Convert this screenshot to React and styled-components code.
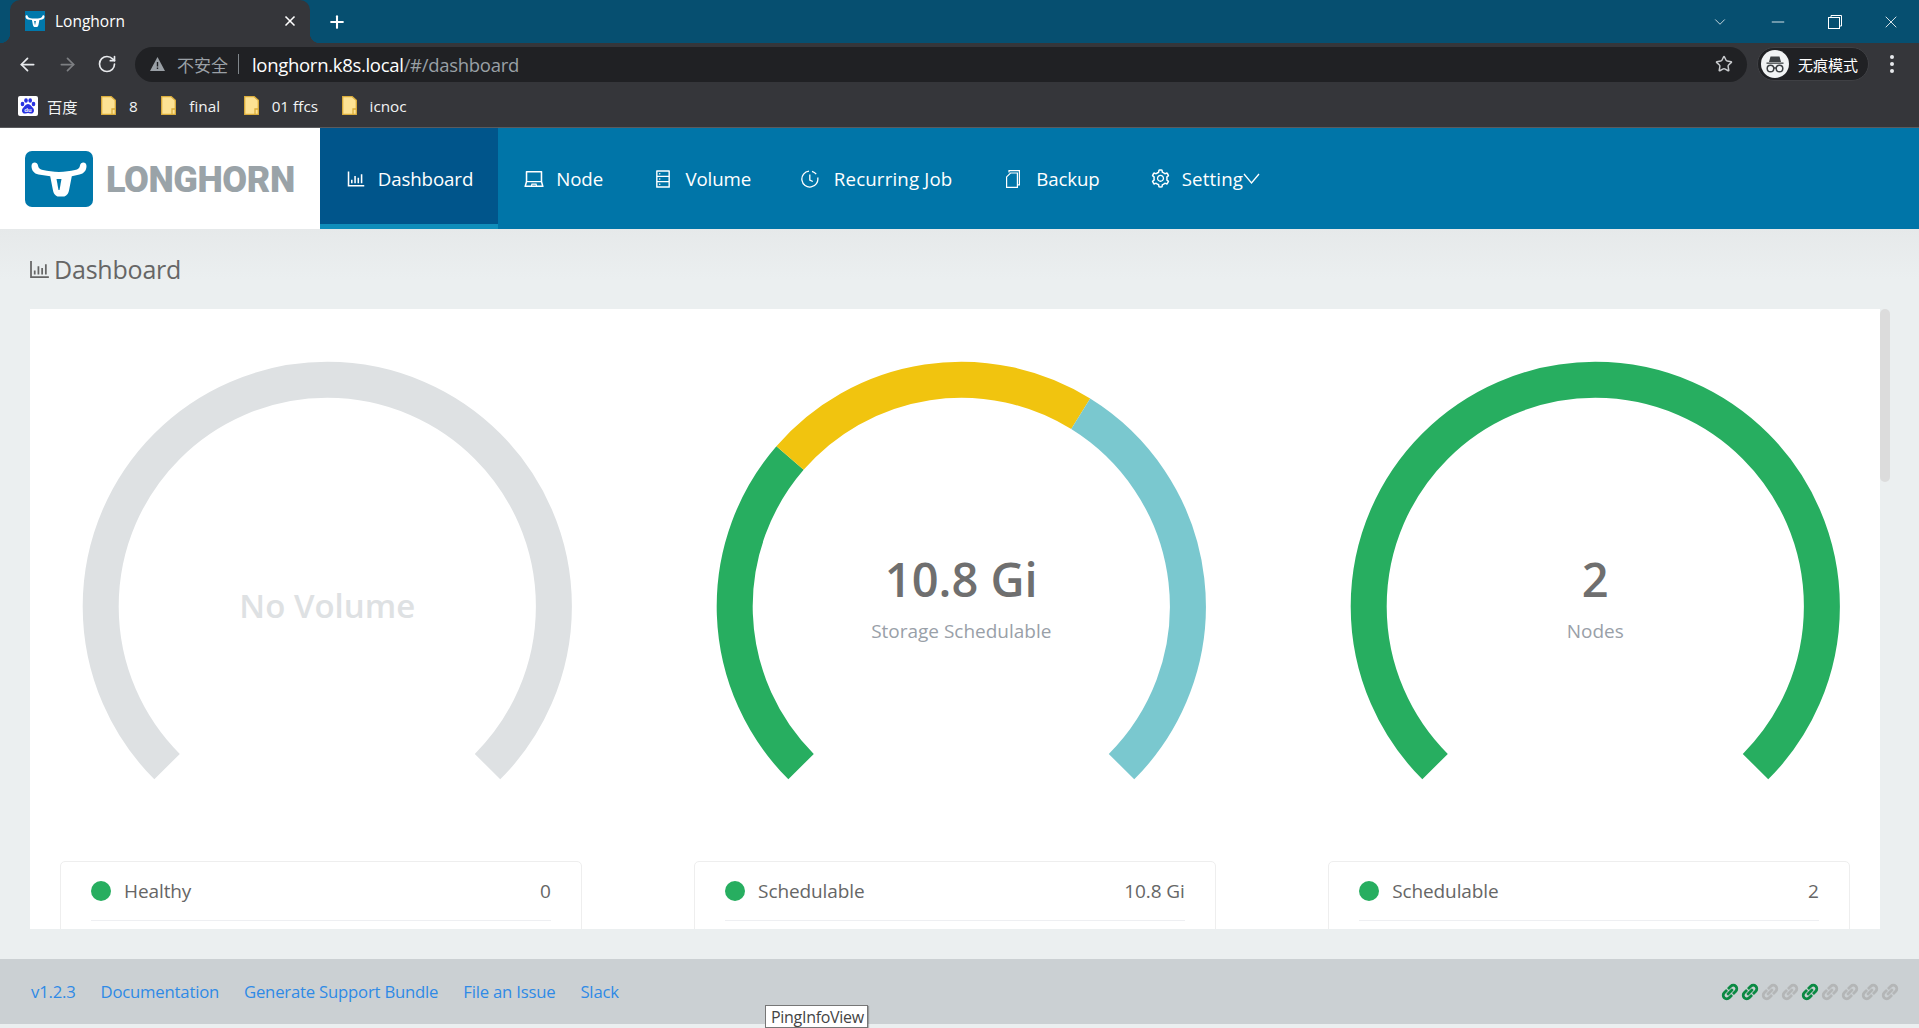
import React from 'react';
import styled, { createGlobalStyle } from 'styled-components';
import { ArrowLeft, ArrowRight, RotateCw, Star, Plus, X, Minus, ChevronDown } from 'lucide-react';
import {
  AiOutlineBarChart,
  AiOutlineLaptop,
  AiOutlineDatabase,
  AiOutlineSetting,
  AiOutlineLink,
} from 'react-icons/ai';

const UI_FONT = '"Open Sans", "Noto Sans CJK SC", sans-serif';

const GlobalStyle = createGlobalStyle`
  html, body {
    margin: 0;
    height: 100%;
    overflow: hidden;
    background: #ebeff0;
    font-family: ${UI_FONT};
  }
  * {
    box-sizing: border-box;
  }
`;

const Page = styled.div`
  position: relative;
  display: flex;
  flex-direction: column;
  height: 1028px;
  width: 1919px;
  overflow: hidden;
`;

/* browser chrome */
const TabStrip = styled.div`
  display: flex;
  align-items: center;
  height: 43px;
  padding-left: 10px;
  background: #064f70;
  color: #fff;
`;

const Tab = styled.div`
  position: relative;
  display: flex;
  align-items: center;
  width: 300px;
  height: 43px;
  padding: 0 12px 2px 15px;
  background: #35363a;
  border-radius: 10px 10px 0 0;
  font-size: 15.5px;

  &::before,
  &::after {
    content: '';
    position: absolute;
    bottom: 0;
    width: 10px;
    height: 10px;
  }
  &::before {
    left: -10px;
    background: radial-gradient(circle at 0 0, transparent 10px, #35363a 10.5px);
  }
  &::after {
    right: -10px;
    background: radial-gradient(circle at 100% 0, transparent 10px, #35363a 10.5px);
  }
`;

const TabTitle = styled.span`
  flex: 1;
  margin-left: 10px;
`;

const NewTab = styled.div`
  display: flex;
  margin-left: 17px;
`;

const WindowControls = styled.div`
  display: flex;
  align-items: center;
  margin-left: auto;
  padding-right: 18px;
  gap: 39.5px;
`;

const Toolbar = styled.div`
  display: flex;
  align-items: center;
  height: 45px;
  padding: 0 0 3px 17px;
  background: #35363a;
  color: #e8eaed;
`;

const NavButtons = styled.div`
  display: flex;
  align-items: center;
  gap: 19px;
  width: 118px;
`;

const Omnibox = styled.div`
  display: flex;
  align-items: center;
  width: 1612px;
  height: 35px;
  padding: 0 14px 0 15px;
  border-radius: 18px;
  background: #202124;
  font-size: 18.5px;
  letter-spacing: -0.3px;
`;

const NotSecure = styled.span`
  margin-left: 12px;
  color: #9aa0a6;
  font-size: 17px;
  letter-spacing: 0;
`;

const Divider = styled.span`
  width: 1px;
  height: 20px;
  margin: 0 13px 0 10px;
  background: #80868b;
`;

const Host = styled.span`
  color: #fff;
`;

const UrlPath = styled.span`
  flex: 1;
  color: #9aa0a6;
`;

const IncognitoPill = styled.div`
  display: flex;
  align-items: center;
  width: 112px;
  height: 34px;
  margin-left: 10px;
  padding-left: 3px;
  border-radius: 17px;
  border: 1px solid #3f4044;
  background: #202124;
  color: #fff;
  font-size: 15px;
  gap: 9px;
`;

const Kebab = styled.div`
  display: flex;
  flex-direction: column;
  gap: 3px;
  margin-left: 21px;
`;

const KebabDot = styled.span`
  width: 4px;
  height: 4px;
  border-radius: 50%;
  background: #e8eaed;
`;

const BookmarkBar = styled.div`
  display: flex;
  align-items: center;
  height: 40px;
  padding: 0 0 4px 18px;
  background: #35363a;
  border-bottom: 1px solid #5a5b5e;
  color: #f1f3f4;
  font-size: 15.3px;
  gap: 23.5px;
`;

const Bookmark = styled.div`
  display: flex;
  align-items: center;
  gap: ${(p) => p.$gap || 13}px;
`;

/* app header */
const Header = styled.header`
  display: flex;
  height: 101px;
  background: #0075a8;
`;

const LogoBox = styled.div`
  display: flex;
  align-items: center;
  width: 320px;
  padding-left: 25px;
  background: #fff;
  gap: 13px;
`;

const LogoText = styled.span`
  margin-top: 2px;
  font-family: Roboto, "Liberation Sans", sans-serif;
  font-size: 36px;
  font-weight: 900;
  letter-spacing: -0.4px;
  color: #9aa3a8;
`;

const Nav = styled.nav`
  display: flex;
`;

const NavItem = styled.a`
  display: flex;
  align-items: center;
  gap: ${(p) => p.$gap}px;
  padding: 5px 25px 0;
  margin-right: ${(p) => (p.$stretch ? -2.5 : 0)}px;
  border-bottom: 5px solid ${(p) => (p.$active ? '#0f8ebb' : 'transparent')};
  background: ${(p) => (p.$active ? '#00558b' : 'transparent')};
  color: #fff;
  font-size: 18.7px;
  letter-spacing: ${(p) => (p.$stretch ? 0.15 : -0.1)}px;
  white-space: nowrap;

  svg {
    flex: none;
  }
`;

const SettingLabel = styled.span`
  display: flex;
  align-items: center;
`;

/* content */
const Content = styled.main`
  display: flex;
  flex-direction: column;
  height: 730px;
  padding: 0 39px 30px 27px;
  background: linear-gradient(#e6e9ea, #ebeff0 50px);
`;

const TitleRow = styled.div`
  display: flex;
  align-items: center;
  gap: 2px;
  height: 80px;
  color: #666;
`;

const Title = styled.h1`
  margin: 0;
  font-size: 25px;
  font-weight: 400;
  letter-spacing: -0.2px;
`;

const Panel = styled.section`
  position: relative;
  flex: 1;
  margin-left: 3px;
  padding: 0 30px;
  overflow: hidden;
  background: #fff;
`;

const Columns = styled.div`
  display: grid;
  grid-template-columns: repeat(3, 521.7px);
  column-gap: 112.4px;
`;

const ScrollThumb = styled.div`
  position: absolute;
  top: 309px;
  left: 1880px;
  width: 10px;
  height: 173px;
  border-radius: 5px;
  background: #dcdcdc;
`;

const GaugeSvg = styled.svg`
  display: block;
  width: 521.7px;
  height: 552px;
`;

const GaugeValue = styled.text`
  font-family: ${UI_FONT};
  font-size: ${(p) => p.$size}px;
  font-weight: 600;
  fill: ${(p) => p.$color};
  text-anchor: middle;
`;

const GaugeLabel = styled.text`
  font-family: ${UI_FONT};
  font-size: 19px;
  fill: #99a0a8;
  text-anchor: middle;
`;

const LegendCard = styled.div`
  height: 120px;
  padding: 0 30px;
  border: 1px solid #eeeeee;
  border-radius: 5px;
`;

const LegendRow = styled.div`
  display: flex;
  align-items: center;
  height: 59px;
  padding-bottom: 1px;
  border-bottom: 1px solid #eeeff2;
  color: #666;
  font-size: 19px;
  letter-spacing: -0.1px;
`;

const Dot = styled.span`
  width: 20px;
  height: 20px;
  margin-right: 13px;
  border-radius: 50%;
  background: ${(p) => p.$color};
`;

const LegendValue = styled.span`
  margin-left: auto;
`;

/* footer */
const Footer = styled.footer`
  display: flex;
  align-items: center;
  height: 65px;
  padding: 0 19px 0 31px;
  background: #cbd0d3;
  gap: 25px;
`;

const FootLink = styled.a`
  color: #2f8ae6;
  font-size: 16.7px;
  letter-spacing: -0.2px;
`;

const LinkIcons = styled.div`
  display: flex;
  margin-left: auto;
`;

const StatusLink = styled(AiOutlineLink)`
  color: ${(p) => (p.$up ? '#0b8a43' : '#b4b6b7')};
  stroke: currentColor;
  stroke-width: 70;
`;

const Tooltip = styled.div`
  position: absolute;
  left: 765px;
  top: 1005px;
  padding: 2px 5px 0 5px;
  height: 23px;
  width: 103px;
  background: #fff;
  border: 1px solid #767676;
  box-shadow: 1px 1px 1px rgba(0, 0, 0, 0.25);
  color: #444;
  font-size: 16px;
  line-height: 19px;
  letter-spacing: -0.3px;
  white-space: nowrap;
`;

const CX = 267.3;
const CY = 297.4;
const R = 226.6;
const STROKE = 36;

const point = (deg) => {
  const rad = (deg * Math.PI) / 180;
  return `${CX + R * Math.cos(rad)} ${CY - R * Math.sin(rad)}`;
};

const Gauge = ({ segments, children }) => (
  <GaugeSvg viewBox="0 0 521.7 552">
    {segments.map(([from, to, color]) => (
      <path
        key={color}
        d={`M${point(from)} A${R} ${R} 0 ${from - to > 180 ? 1 : 0} 1 ${point(to)}`}
        fill="none"
        stroke={color}
        strokeWidth={STROKE}
      />
    ))}
    {children}
  </GaugeSvg>
);

const HEALTHY = [[225, -45, '#27ae60']];
const NO_VOLUME = [[225, -45, '#dee1e3']];
const STORAGE = [
  [225, 139.1, '#27ae60'],
  [139.1, 58.2, '#f1c40f'],
  [58.2, -45, '#7ac8cf'],
];

const BULL_PATH =
  'M6.500 15c0-4.500 6-4.500 6.500-.5.300 2.500 2 4 5 4.500 5 .9 10 2 16 2s11-1.100 16-2c3-.5 4.700-2 5-4.500.5-4 6.500-4 6.500.5 0 4.500-2.500 7.500-7 8.500l-7.700 1.800-2.800 14.200c-.7 3.600-3 6-5.500 6h-5c-2.500 0-4.800-2.400-5.500-6l-2.800-14.200L13.500 23.500C9 22.500 6.500 19.500 6.500 15z';

const LogoMark = () => (
  <svg width="68" height="56" viewBox="0 0 68 56">
    <rect width="68" height="56" rx="7" fill="#0078ab" />
    <path d={BULL_PATH} fill="#fff" />
    <path d="M31.500 28h5l-2 11h-1z" fill="#0078ab" />
  </svg>
);

const Favicon = () => (
  <svg width="20" height="20" viewBox="5 -1 58 58">
    <rect x="5" y="-1" width="58" height="58" fill="#0078ab" />
    <path d={BULL_PATH} fill="#fff" />
    <path d="M31.500 28h5l-2 11h-1z" fill="#0078ab" />
  </svg>
);

const Folder = () => (
  <svg width="15" height="19" viewBox="0 0 15 19">
    <path d="M.7.7h9.500l4.100 3.500v14.100H.7z" fill="#fde293" stroke="#dcae3c" strokeWidth="1.300" />
    <path d="M14 13h-3v5" fill="none" stroke="#dcae3c" strokeWidth="1.300" />
  </svg>
);

const BaiduIcon = () => (
  <svg width="20" height="20" viewBox="0 0 20 20">
    <rect width="20" height="20" rx="2" fill="#fff" />
    <g fill="#2932e1">
      <ellipse cx="4.500" cy="8" rx="1.800" ry="2.300" />
      <ellipse cx="8" cy="4.500" rx="1.800" ry="2.300" />
      <ellipse cx="12.200" cy="4.500" rx="1.800" ry="2.300" />
      <ellipse cx="15.500" cy="8" rx="1.800" ry="2.300" />
      <path d="M10 8c-2.500 0-3.500 2.500-5 4-2 2-1 6 2.500 5.500 1-.1 1.700-.4 2.500-.4s1.500.3 2.500.4c3.500.5 4.500-3.500 2.500-5.500-1.500-1.500-2.500-4-5-4z" />
    </g>
    <text x="10" y="16" fontSize="6" fontWeight="700" fill="#fff" textAnchor="middle" fontFamily="Liberation Sans, sans-serif">du</text>
  </svg>
);

const Warning = () => (
  <svg width="15" height="14" viewBox="0 0 15 14">
    <path d="M7.500 0L15 14H0z" fill="#9aa0a6" />
    <path d="M6.800 5h1.400v4.500H6.800zM6.800 10.500h1.400V12H6.800z" fill="#202124" />
  </svg>
);

const IncognitoIcon = () => (
  <svg width="28" height="28" viewBox="0 0 28 28">
    <circle cx="14" cy="14" r="14" fill="#f1f3f4" />
    <path d="M9.500 6.500h9l1.500 5.500H8z" fill="#3c4043" />
    <path d="M5.500 12.500h17v1.300h-17z" fill="#3c4043" />
    <circle cx="9.500" cy="18.500" r="3.300" fill="none" stroke="#3c4043" strokeWidth="1.500" />
    <circle cx="18.500" cy="18.500" r="3.300" fill="none" stroke="#3c4043" strokeWidth="1.500" />
    <path d="M12.800 18h2.400" stroke="#3c4043" strokeWidth="1.500" />
  </svg>
);

const RestoreIcon = () => (
  <svg width="14" height="14" viewBox="0 0 14 14" fill="none" stroke="#fff" strokeWidth="1">
    <rect x=".5" y="2.500" width="11" height="11" />
    <path d="M3 2.500V.5h10.500V11h-2" />
  </svg>
);

const ClockIcon = () => (
  <svg width="18" height="18" viewBox="0 0 18 18" fill="none" stroke="#fff" strokeWidth="1.300">
    <path d="M16.700 7.500A8 8 0 1 1 8 1.100" />
    <path d="M11 1.400c1.700.5 3.200 1.500 4.200 2.800" />
    <path d="M8.800 4.500V10l3 1.500" />
  </svg>
);

const CopyIcon = () => (
  <svg width="20" height="18" viewBox="-6 0 20 18" fill="none" stroke="#fff" strokeWidth="1.200">
    <path d="M3 2.500V.6h10.400v14.200h-2" />
    <path d="M.6 3h10.800v14.400H4.500L.6 13.500z" transform="matrix(1 0 0 -1 0 20.400)" />
  </svg>
);

const CaretIcon = () => (
  <svg width="17" height="11" viewBox="0 0 17 11" fill="none" stroke="#fff" strokeWidth="1.300">
    <path d="M1 1l7.500 9L16 1" />
  </svg>
);

const STATUS_LINKS = [true, true, false, false, true, false, false, false, false];

const App = () => (
  <Page>
    <GlobalStyle />
    <TabStrip>
      <Tab>
        <Favicon />
        <TabTitle>Longhorn</TabTitle>
        <X size={16} strokeWidth={2.500} />
      </Tab>
      <NewTab>
        <Plus size={20} strokeWidth={2.500} />
      </NewTab>
      <WindowControls>
        <ChevronDown size={18} strokeWidth={1} />
        <Minus size={20} strokeWidth={1} />
        <RestoreIcon />
        <X size={20} strokeWidth={1} />
      </WindowControls>
    </TabStrip>
    <Toolbar>
      <NavButtons>
        <ArrowLeft size={21} />
        <ArrowRight size={21} color="#7d7f82" />
        <RotateCw size={20} />
      </NavButtons>
      <Omnibox>
        <Warning />
        <NotSecure>不安全</NotSecure>
        <Divider />
        <Host>longhorn.k8s.local</Host>
        <UrlPath>/#/dashboard</UrlPath>
        <Star size={18} color="#c8cacd" strokeWidth={2} />
      </Omnibox>
      <IncognitoPill>
        <IncognitoIcon />
        无痕模式
      </IncognitoPill>
      <Kebab>
        <KebabDot />
        <KebabDot />
        <KebabDot />
      </Kebab>
    </Toolbar>
    <BookmarkBar>
      <Bookmark $gap={9}>
        <BaiduIcon />
        百度
      </Bookmark>
      <Bookmark>
        <Folder />8
      </Bookmark>
      <Bookmark>
        <Folder />final
      </Bookmark>
      <Bookmark>
        <Folder />01 ffcs
      </Bookmark>
      <Bookmark>
        <Folder />icnoc
      </Bookmark>
    </BookmarkBar>

    <Header>
      <LogoBox>
        <LogoMark />
        <LogoText>LONGHORN</LogoText>
      </LogoBox>
      <Nav>
        <NavItem $active $gap={10.7}>
          <AiOutlineBarChart size={22} />
          Dashboard
        </NavItem>
        <NavItem $gap={11}>
          <AiOutlineLaptop size={22} />
          Node
        </NavItem>
        <NavItem $gap={12.3}>
          <AiOutlineDatabase size={20} />
          Volume
        </NavItem>
        <NavItem $stretch $gap={14.7}>
          <ClockIcon />
          Recurring Job
        </NavItem>
        <NavItem $gap={16.3}>
          <CopyIcon />
          Backup
        </NavItem>
        <NavItem $stretch $gap={11}>
          <AiOutlineSetting size={21} />
          <SettingLabel>
            Setting
            <CaretIcon />
          </SettingLabel>
        </NavItem>
      </Nav>
    </Header>

    <Content>
      <TitleRow>
        <AiOutlineBarChart size={25} />
        <Title>Dashboard</Title>
      </TitleRow>
      <Panel>
        <Columns>
          <div>
            <Gauge segments={NO_VOLUME}>
              <GaugeValue x={CX} y={CY + 12} $size={33} $color="#dee1e3">No Volume</GaugeValue>
            </Gauge>
            <LegendCard>
              <LegendRow>
                <Dot $color="#27ae60" />
                Healthy
                <LegendValue>0</LegendValue>
              </LegendRow>
            </LegendCard>
          </div>
          <div>
            <Gauge segments={STORAGE}>
              <GaugeValue x={CX} y={CY - 9.500} $size={47} $color="#6f6f6f">10.8 Gi</GaugeValue>
              <GaugeLabel x={CX} y={CY + 31.500}>Storage Schedulable</GaugeLabel>
            </Gauge>
            <LegendCard>
              <LegendRow>
                <Dot $color="#27ae60" />
                Schedulable
                <LegendValue>10.8 Gi</LegendValue>
              </LegendRow>
            </LegendCard>
          </div>
          <div>
            <Gauge segments={HEALTHY}>
              <GaugeValue x={CX} y={CY - 9.500} $size={47} $color="#6f6f6f">2</GaugeValue>
              <GaugeLabel x={CX} y={CY + 31.500}>Nodes</GaugeLabel>
            </Gauge>
            <LegendCard>
              <LegendRow>
                <Dot $color="#27ae60" />
                Schedulable
                <LegendValue>2</LegendValue>
              </LegendRow>
            </LegendCard>
          </div>
        </Columns>
      </Panel>
    </Content>
    <ScrollThumb />

    <Footer>
      <FootLink>v1.2.3</FootLink>
      <FootLink>Documentation</FootLink>
      <FootLink>Generate Support Bundle</FootLink>
      <FootLink>File an Issue</FootLink>
      <FootLink>Slack</FootLink>
      <LinkIcons>
        {STATUS_LINKS.map((up, i) => (
          <StatusLink key={i} size={20} $up={up} />
        ))}
      </LinkIcons>
    </Footer>
    <Tooltip>PingInfoView</Tooltip>
  </Page>
);

export default App;
